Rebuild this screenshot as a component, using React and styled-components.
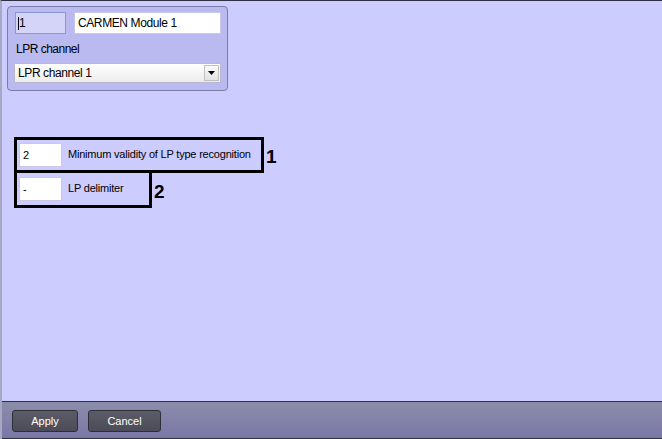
import * as React from 'react'
import styled, { createGlobalStyle } from 'styled-components'

const Global = createGlobalStyle`
  html, body { margin: 0; padding: 0; background: #ccccff; }
  body { font-family: "Liberation Sans", Arial, sans-serif; font-size: 11px; color: #000; }
`

const Window = styled('div')`
  width: 662px;
  height: 439px;
  box-sizing: border-box;
  display: flex;
  flex-direction: column;
  background: #ccccff;
  border-top: 1px solid #303040;
  border-left: 2px solid #a8a8c4;
`

const Content = styled('div')`
  flex: 1;
  padding: 5px 0 0 5px;
  display: flex;
  flex-direction: column;
`

const Group = styled('div')`
  width: 221px;
  height: 85px;
  box-sizing: border-box;
  border: 1px solid #7c7ca8;
  border-radius: 4px;
  background: #babaf0;
  padding: 5px 6px 0 7px;
  display: flex;
  flex-direction: column;
`

const Row = styled('div')`
  display: flex;
  gap: 8px;
`

const Field = styled('div')`
  box-sizing: border-box;
  flex-shrink: 0;
  width: ${p => p.w}px;
  height: ${p => p.h || 22}px;
  background: ${p => (p.dim ? '#d4d4f8' : '#ffffff')};
  border: 1px solid ${p => (p.dim ? '#8a9ad8' : '#c8c8e8')};
  padding: ${p => (p.h ? '4px 3px' : '3px 2px')};
  font-size: ${p => (p.small ? 11 : 12)}px;
  letter-spacing: ${p => (p.small ? 0 : -0.4)}px;
  line-height: 14px;
  display: flex;
  align-items: flex-start;
`

const Caret = styled('span')`
  display: inline-block;
  width: 1px;
  height: 13px;
  background: #000;
  margin: 1px 0 0 0;
`

const Caption = styled('div')`
  font-size: 12px;
  letter-spacing: -0.5px;
  margin: 8px 0 0 1px;
  height: 14px;
`

const Select = styled('div')`
  margin: 7px 0 0 -1px;
  width: 207px;
  height: 20px;
  box-sizing: border-box;
  border: 1px solid #b8b8d0;
  background: linear-gradient(#ffffff, #ececec);
  display: flex;
  align-items: center;
  font-size: 12px;
  letter-spacing: -0.4px;
  padding-left: 3px;
  justify-content: space-between;
`

const DropButton = styled('div')`
  width: 15px;
  height: 16px;
  margin-right: 1px;
  box-sizing: border-box;
  border: 1px solid #c0c0c0;
  background: linear-gradient(#fafafa, #e2e2e2);
  display: flex;
  align-items: center;
  justify-content: center;
`

const Params = styled('div')`
  margin: 46px 0 0 7px;
  display: flex;
  flex-direction: column;
`

const ParamRow = styled('div')`
  display: flex;
  align-items: center;
`

const Marked = styled('div')`
  box-sizing: border-box;
  flex-shrink: 0;
  width: ${p => p.w}px;
  height: ${p => p.h}px;
  border: 3px solid #000;
  margin-top: ${p => (p.joined ? -3 : 0)}px;
  display: flex;
  align-items: center;
  padding-left: 2px;
  gap: 6px;
`

const Label = styled('span')`
  font-size: 11px;
  letter-spacing: -0.2px;
  white-space: nowrap;
  margin-top: -2px;
`

const Num = styled('span')`
  font-weight: bold;
  font-size: 19px;
  margin-left: 2px;
  margin-top: 3px;
`

const Footer = styled('div')`
  height: 38px;
  box-sizing: border-box;
  border-top: 1px solid #303040;
  border-bottom: 1px solid #303040;
  background: linear-gradient(#8c8caa, #7a77a6);
  display: flex;
  align-items: center;
  gap: 10px;
  padding: 0 0 0 10px;
`

const Button = styled('button')`
  width: ${p => p.w}px;
  height: 22px;
  box-sizing: border-box;
  background: linear-gradient(#5c5c68, #4c4c58);
  border: 1px solid #2e2e38;
  border-radius: 3px;
  color: #fff;
  font-family: "Liberation Sans", Arial, sans-serif;
  font-size: 11px;
  padding: 0;
  margin-top: 1px;
`

export default function App() {
  return (
    <>
      <Global />
      <Window>
        <Content>
          <Group>
            <Row>
              <Field w={51} dim><Caret />1</Field>
              <Field w={147} style={{ paddingLeft: 3 }}>CARMEN Module 1</Field>
            </Row>
            <Caption>LPR channel</Caption>
            <Select>
              LPR channel 1
              <DropButton>
                <svg width="7" height="4" viewBox="0 0 7 4">
                  <path d="M0 0H7L3.5 4Z" fill="#000" />
                </svg>
              </DropButton>
            </Select>
          </Group>
          <Params>
            <ParamRow>
              <Marked w={250} h={36}>
                <Field w={43} h={24} small>2</Field>
                <Label>Minimum validity of LP type recognition</Label>
              </Marked>
              <Num>1</Num>
            </ParamRow>
            <ParamRow>
              <Marked w={138} h={38} joined>
                <Field w={43} h={24} small>-</Field>
                <Label>LP delimiter</Label>
              </Marked>
              <Num>2</Num>
            </ParamRow>
          </Params>
        </Content>
        <Footer>
          <Button w={66}>Apply</Button>
          <Button w={73}>Cancel</Button>
        </Footer>
      </Window>
    </>
  )
}
